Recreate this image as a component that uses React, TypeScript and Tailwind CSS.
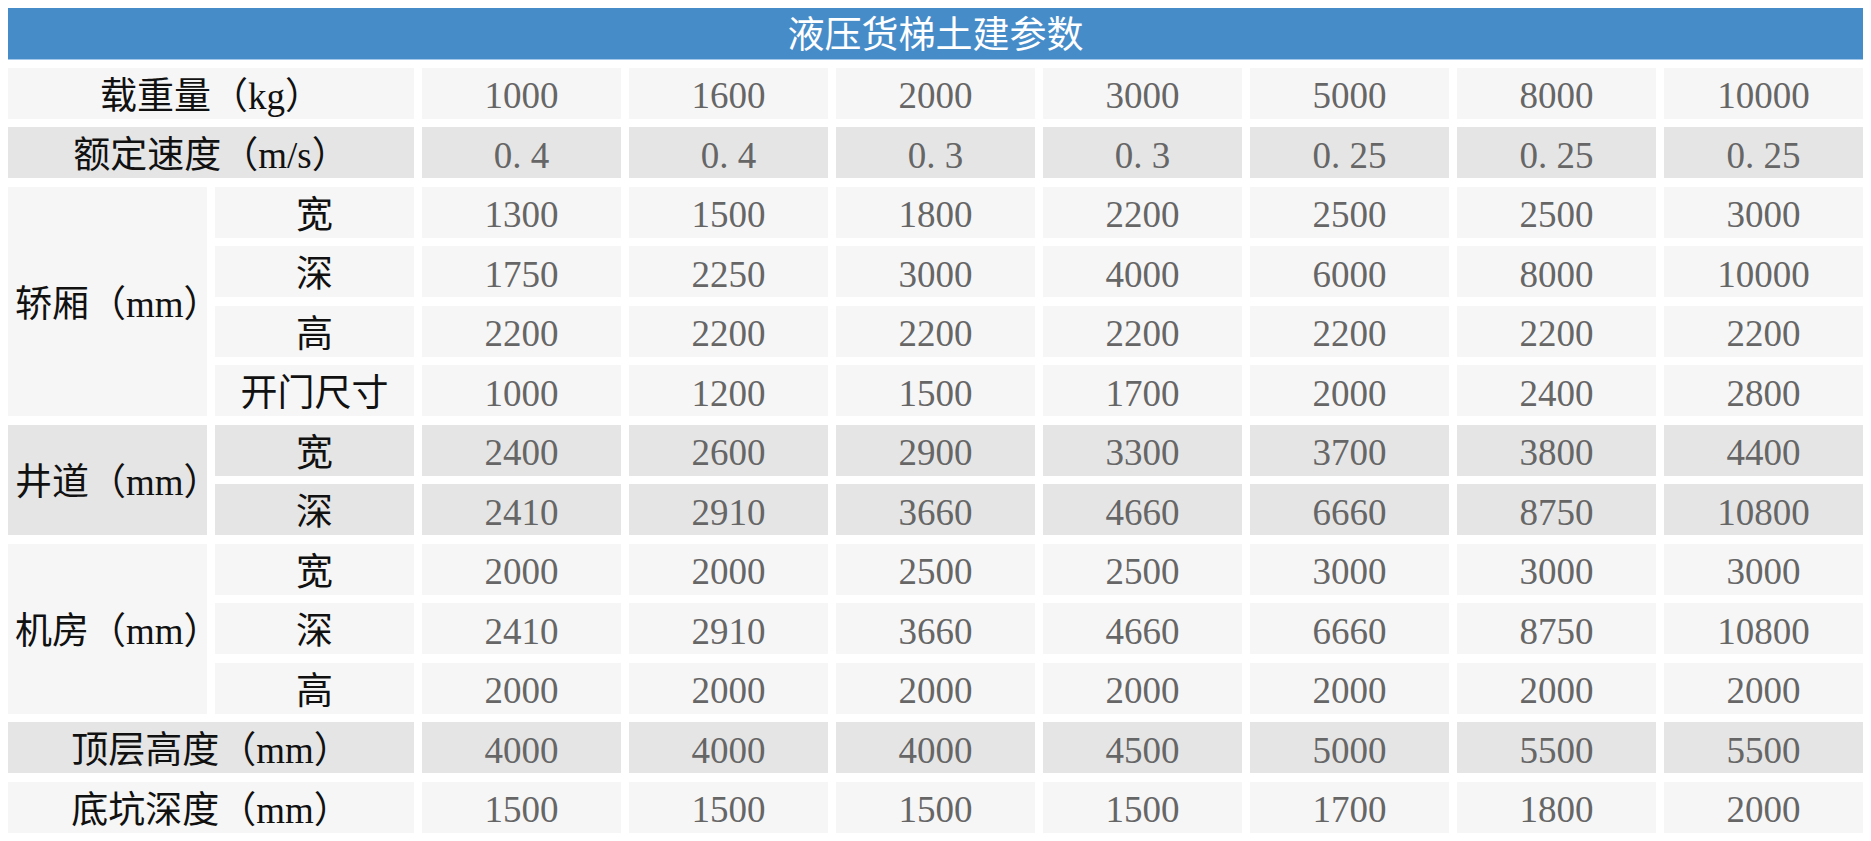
const rows: { group?: string; span?: number; label: string; values: string[]; dark: boolean; full?: boolean }[] = [
  { label: "载重量（kg）", full: true, dark: false, values: ["1000", "1600", "2000", "3000", "5000", "8000", "10000"] },
  { label: "额定速度（m/s）", full: true, dark: true, values: ["0.4", "0.4", "0.3", "0.3", "0.25", "0.25", "0.25"] },
  { group: "轿厢（mm）", span: 4, label: "宽", dark: false, values: ["1300", "1500", "1800", "2200", "2500", "2500", "3000"] },
  { label: "深", dark: false, values: ["1750", "2250", "3000", "4000", "6000", "8000", "10000"] },
  { label: "高", dark: false, values: ["2200", "2200", "2200", "2200", "2200", "2200", "2200"] },
  { label: "开门尺寸", dark: false, values: ["1000", "1200", "1500", "1700", "2000", "2400", "2800"] },
  { group: "井道（mm）", span: 2, label: "宽", dark: true, values: ["2400", "2600", "2900", "3300", "3700", "3800", "4400"] },
  { label: "深", dark: true, values: ["2410", "2910", "3660", "4660", "6660", "8750", "10800"] },
  { group: "机房（mm）", span: 3, label: "宽", dark: false, values: ["2000", "2000", "2500", "2500", "3000", "3000", "3000"] },
  { label: "深", dark: false, values: ["2410", "2910", "3660", "4660", "6660", "8750", "10800"] },
  { label: "高", dark: false, values: ["2000", "2000", "2000", "2000", "2000", "2000", "2000"] },
  { label: "顶层高度（mm）", full: true, dark: true, values: ["4000", "4000", "4000", "4500", "5000", "5500", "5500"] },
  { label: "底坑深度（mm）", full: true, dark: false, values: ["1500", "1500", "1500", "1500", "1700", "1800", "2000"] },
];

const spanClass: Record<number, string> = {
  2: "row-span-2",
  3: "row-span-3",
  4: "row-span-4",
};

// the source font sets the period in a half-em box
function Num({ value }: { value: string }) {
  const parts = value.split(".");
  if (parts.length === 1) return <>{value}</>;
  return (
    <>
      {parts[0]}
      <span className="inline-block w-[0.5em]">.</span>
      {parts[1]}
    </>
  );
}

export default function App() {
  return (
    <div className="w-[1871px] h-[841px] bg-white px-2 pt-2 font-['Liberation_Serif','Noto_Sans_CJK_SC',serif] text-[37px] leading-none">
      <div className="h-[52px] bg-[#468cc9] border-b border-[#a3c8ea] flex items-center justify-center text-white pt-[3px] mb-[7.5px]">
        液压货梯土建参数
      </div>

      <div className="grid grid-cols-9 grid-rows-[repeat(13,51px)] gap-x-2 gap-y-[8.5px]">
        {rows.map((row, i) => {
          const bg = row.dark ? "bg-[#e5e5e5]" : "bg-[#f6f6f6]";
          return (
            <div key={i} className="contents">
              {row.group && (
                <div className={`${spanClass[row.span!]} ${bg} flex items-center pl-[7px] pt-[6px] text-[#111]`}>
                  {row.group}
                </div>
              )}
              <div className={`${row.full ? "col-span-2" : ""} ${bg} flex items-center justify-center pt-[6px] text-[#111]`}>
                {row.label}
              </div>
              {row.values.map((v, j) => (
                <div key={j} className={`${bg} flex items-center justify-center text-[#666] pt-[5px]`}>
                  <Num value={v} />
                </div>
              ))}
            </div>
          );
        })}
      </div>
    </div>
  );
}
